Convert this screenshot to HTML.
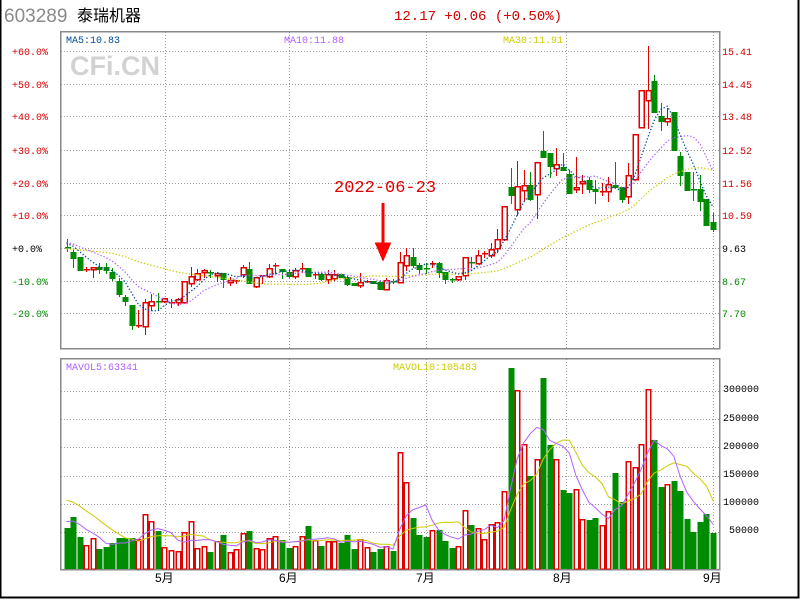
<!DOCTYPE html>
<html><head><meta charset="utf-8">
<style>
html,body{margin:0;padding:0;background:#fff;}
#w{position:relative;width:800px;height:600px;overflow:hidden;background:#fff;}
svg{position:absolute;left:0;top:0;}
.m{font-family:"Liberation Mono",monospace;}
</style></head><body>
<div id="w">
<svg id="s" width="800" height="600" xmlns="http://www.w3.org/2000/svg" shape-rendering="crispEdges">
<rect x="0.5" y="-2" width="798" height="599.5" fill="none" stroke="#000" stroke-width="2"/>
<text x="4" y="22" font-family="Liberation Sans,sans-serif" font-size="19" fill="#8a8a8a">603289</text>
<text x="77" y="21" font-family="Liberation Sans,'Noto Sans CJK SC',sans-serif" font-size="16" fill="#000">泰瑞机器</text>
<text x="394" y="20" class="m" font-size="14" fill="#d00000">12.17 +0.06 (+0.50%)</text>
<text x="70" y="75" font-family="Liberation Sans,sans-serif" font-weight="bold" font-size="27" fill="#d2d2d2">CFi.CN</text>
<g id="grid"></g>
<rect x="60.5" y="31.5" width="659" height="317" fill="none" stroke="#888" stroke-width="1.5"/>
<rect x="60.5" y="358.5" width="659" height="211" fill="none" stroke="#888" stroke-width="1.5"/>
<g class="m" font-size="10">
<text x="66" y="43" fill="#004c99">MA5:10.83</text>
<text x="284" y="43" fill="#b060ff">MA10:11.88</text>
<text x="503" y="43" fill="#cccc00">MA30:11.91</text>
<text x="66" y="370" fill="#b060ff">MAVOL5:63341</text>
<text x="393" y="370" fill="#cccc00">MAVOL10:105483</text>
<g fill="#d00000">
<text x="12" y="55">+60.0%</text><text x="12" y="88">+50.0%</text><text x="12" y="120">+40.0%</text>
<text x="12" y="154">+30.0%</text><text x="12" y="187">+20.0%</text><text x="12" y="219">+10.0%</text>
<text x="722" y="55">15.41</text><text x="722" y="88">14.45</text><text x="722" y="120">13.48</text>
<text x="722" y="154">12.52</text><text x="722" y="187">11.56</text><text x="722" y="219">10.59</text>
</g>
<text x="12" y="252" fill="#000">+0.0%</text><text x="722" y="252" fill="#000">9.63</text>
<g fill="#008800">
<text x="12" y="285">-10.0%</text><text x="12" y="317">-20.0%</text>
<text x="722" y="285">8.67</text><text x="722" y="317">7.70</text>
</g>
<g fill="#000">
<text x="723" y="392">300000</text><text x="723" y="421">250000</text><text x="723" y="449">200000</text>
<text x="723" y="477">150000</text><text x="723" y="505">100000</text><text x="729" y="533">50000</text>
</g>
</g>
<g font-family="Liberation Sans,'Noto Sans CJK SC',sans-serif" font-size="12" fill="#000">
<text x="155" y="582">5月</text><text x="279" y="582">6月</text><text x="416" y="582">7月</text><text x="553" y="582">8月</text><text x="703" y="582">9月</text>
</g>
<text x="334" y="192" class="m" font-size="17" fill="#e00000">2022-06-23</text>
<g id="c"></g>
<path d="M383 203 L383 246 M377 244 L389 244 L383 258 Z" stroke="#ff0000" stroke-width="3" fill="#ff0000"/>
</svg>
</div>
<script>
var NS="http://www.w3.org/2000/svg";
function el(p,t,a){var e=document.createElementNS(NS,t);for(var k in a)e.setAttribute(k,a[k]);p.appendChild(e);return e;}
var g=document.getElementById('grid'),c=document.getElementById('c');
var dash={stroke:"#999","stroke-width":1,"stroke-dasharray":"1,2",fill:"none"};
[51,84,116,150,183,215,248,281,313].forEach(function(y){el(g,'line',Object.assign({x1:61,x2:719,y1:y+.5,y2:y+.5},dash));});
[391,419,447,476,504,532].forEach(function(y){el(g,'line',Object.assign({x1:61,x2:719,y1:y+.5,y2:y+.5},dash));});
[165,289,426,566,713].forEach(function(x){el(g,'line',Object.assign({x1:x+.5,x2:x+.5,y1:32,y2:348},dash));el(g,'line',Object.assign({x1:x+.5,x2:x+.5,y1:359,y2:569},dash));});
var A=[["g",50,50,28,64],["g",66,83,58,112],["g",80,119,80,120],["r",118,118,112,122],["r",111,118,111,140],["g",111,117,98,130],["g",111,120,100,130],["g",126,143,113,150],["g",153,191,145,197],["g",201,212,195,224],["g",224,284,224,298],["r",284,284,240,290],["r",216,289,208,311],["r",214,226,192,241],["g",214,214,188,241],["r",205,212,205,215],["r",216,216,207,230],["r",208,216,205,226],["r",154,215,154,218],["r",139,160,112,168],["r",130,146,118,150],["r",120,127,117,140],["g",127,127,120,140],["r",129,136,127,153],["g",130,146,130,172],["r",150,157,140,165],["r",150,150,150,160],["r",112,133,105,140],["g",118,160,97,160],["r",142,167,142,170],["r",134,134,134,160],["r",115,139,103,141],["r",104,109,98,130],["g",117,124,117,145],["g",125,137,117,140],["r",121,139,113,145],["r",115,115,100,125],["g",115,137,115,137],["r",133,133,130,145],["g",133,146,130,150],["r",133,148,120,158],["r",133,145,120,150],["g",133,140,133,140],["g",140,161,137,165],["g",160,165,160,165],["r",156,166,130,172],["r",153,153,150,156],["g",152,160,152,160],["g",155,176,150,176],["r",151,176,145,178]];
var B=[["g",483,483,478,488],["r",427,485,397,485],["r",406,436,383,450],["g",411,436,383,440],["g",436,448,430,458],["g",443,443,430,458],["r",428,428,423,440],["g",430,455,425,470],["g",456,478,456,488],["g",478,478,473,485],["r",467,476,467,480],["r",412,466,412,476],["g",425,425,410,440],["r",405,428,390,430],["r",400,400,392,410],["r",388,406,370,410],["r",358,385,327,395],["r",259,358,259,360],["g",202,225,145,250],["r",197,268,123,285],["r",196,211,150,240],["g",196,238,155,240],["r",127,223,127,293],["g",94,110,33,110],["g",100,139,100,172],["r",133,145,84,165],["g",141,149,100,150],["g",163,220,150,220],["r",202,208,112,215],["r",184,190,165,220],["g",181,206,170,215],["g",206,212,180,250],["r",212,212,190,225],["r",192,214,170,243],["g",194,200,125,200],["g",201,238,201,245],["r",166,229,128,250],["r",43,178,43,178]];
var C=[["r",90,127,90,127],["r",90,100,46,128],["g",81,112,75,112],["g",116,121,103,130],["r",118,121,108,125],["g",112,150,112,150],["g",156,175,152,185],["g",172,190,172,190],["g",189,189,172,200],["g",189,201,175,210],["g",199,225,199,225],["g",222,229,213,231]];
var D=[];
A.forEach(function(d){D.push([d[0],230+d[1]/3,230+d[2]/3,230+d[3]/3,230+d[4]/3]);});
B.forEach(function(d){D.push([d[0],120+d[1]/3,120+d[2]/3,120+d[3]/3,120+d[4]/3]);});
C.forEach(function(d){D.push(d);});
var V=[[41,"g"],[52,"g"],[32,"g"],[24,"r"],[31,"r"],[20,"g"],[22,"g"],[26,"g"],[31,"g"],[31,"g"],[31,"g"],[30,"r"],[55,"r"],[48,"r"],[38,"g"],[22,"r"],[19,"r"],[18,"r"],[37,"r"],[48,"r"],[21,"r"],[23,"r"],[17,"g"],[28,"r"],[34,"g"],[17,"r"],[20,"r"],[36,"r"],[38,"g"],[21,"r"],[20,"r"],[31,"r"],[33,"r"],[29,"g"],[21,"g"],[23,"r"],[33,"r"],[43,"g"],[29,"r"],[23,"g"],[28,"r"],[28,"r"],[26,"g"],[34,"g"],[20,"g"],[30,"r"],[22,"r"],[17,"g"],[20,"g"],[23,"r"],[18,"g"],[117,"r"],[87,"r"],[51,"g"],[34,"g"],[32,"g"],[39,"r"],[39,"g"],[28,"g"],[21,"g"],[23,"r"],[59,"r"],[44,"g"],[41,"r"],[30,"r"],[45,"r"],[47,"r"],[78,"r"],[201,"g"],[179,"r"],[125,"r"],[93,"g"],[110,"r"],[191,"g"],[124,"g"],[110,"r"],[79,"g"],[76,"g"],[80,"r"],[50,"r"],[49,"g"],[51,"g"],[44,"r"],[58,"r"],[96,"g"],[67,"g"],[108,"r"],[102,"r"],[125,"r"],[180,"r"],[129,"g"],[82,"g"],[85,"r"],[88,"g"],[78,"g"],[50,"g"],[37,"g"],[47,"g"],[55,"g"],[36,"g"]];
var RED="#e00000",GRN="#008c00";
function cx(i){return 66.5+i*6.53;}
D.forEach(function(d,i){
 var x=Math.round(cx(i)),col=d[0]=="r"?RED:GRN;
 var t=Math.round(d[1]),b=Math.round(d[2]),h=Math.round(d[3]),l=Math.round(d[4]);
 el(c,'line',{x1:x+.5,x2:x+.5,y1:h,y2:l+1,stroke:col,"stroke-width":1});
 if(b-t<2){el(c,'rect',{x:x-2,y:t,width:6,height:1.5,fill:col});}
 else if(d[0]=="r"){el(c,'rect',{x:x-2,y:t+.5,width:5,height:b-t,fill:"#fff",stroke:col,"stroke-width":1.5});}
 else el(c,'rect',{x:x-2.5,y:t,width:6,height:b-t+1,fill:col});
});
V.forEach(function(v,i){
 var x=Math.round(cx(i))-2.5,h=v[0];
 if(v[1]=="r")el(c,'rect',{x:x+.7,y:569-h+.7,width:4.6,height:h-.7,fill:"#fff",stroke:RED,"stroke-width":1.4});
 else el(c,'rect',{x:x,y:569-h,width:6,height:h,fill:GRN});
});
function ma(arr,n,pad){var a=[];for(var q=0;q<n;q++)a.push(pad);a=a.concat(arr);
 return arr.map(function(_,i){var s=0;for(var j=i+1;j<=i+n;j++)s+=a[j];return s/n;});}
var close=D.map(function(d){return d[0]=="r"?d[1]:d[2];});
function pl(vals,col,dashed){var pts=vals.map(function(v,i){return cx(i).toFixed(1)+","+v.toFixed(1);}).join(" ");
 var a={points:pts,fill:"none",stroke:col,"stroke-width":dashed?1.3:1};if(dashed)a["stroke-dasharray"]="1.3,2";
 var e=el(c,'polyline',a);e.setAttribute("shape-rendering","auto");}
pl(ma(close,30,249),"#cccc00",true);
pl(ma(close,10,242),"#b060ff",true);
pl(ma(close,5,242),"#004c99",true);
var vh=V.map(function(v){return 569-v[0];});
pl(ma(vh,10,497),"#cccc00",false);
pl(ma(vh,5,520),"#b060ff",false);
</script>
</body></html>
